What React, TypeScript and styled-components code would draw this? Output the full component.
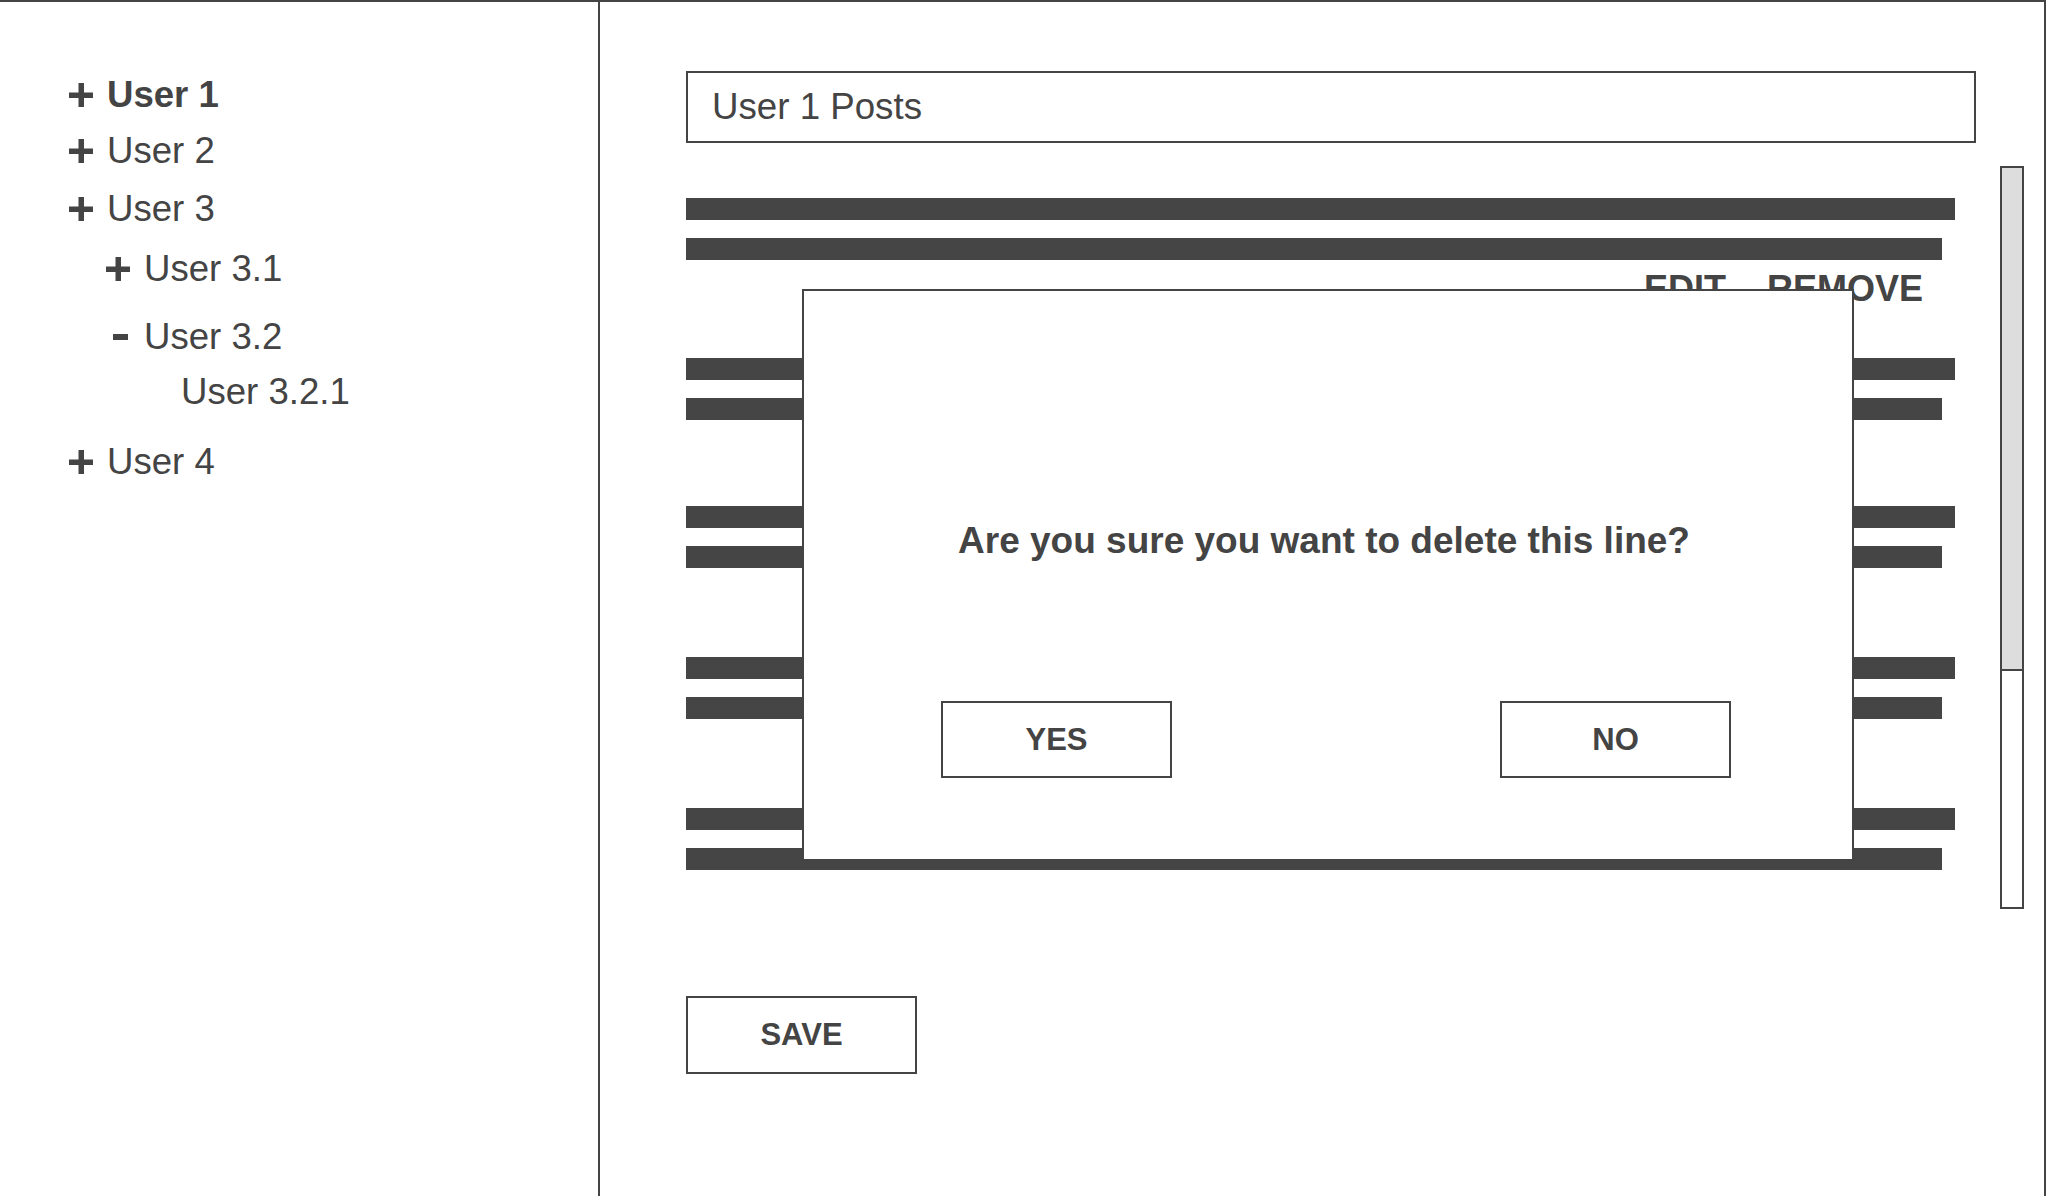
import styled, { createGlobalStyle } from 'styled-components';

const GlobalStyle = createGlobalStyle`
  html, body {
    margin: 0;
    padding: 0;
    background: #fff;
  }
  body {
    font-family: 'Liberation Sans', Arial, sans-serif;
    color: #444;
  }
  * {
    box-sizing: border-box;
  }
`;

type TreeItem = {
  label: string;
  level: number;
  marker: 'plus' | 'minus' | null;
  bold?: boolean;
  gap: number;
};

// ツリーの項目
const treeItems: Array<TreeItem> = [
  { label: 'User 1', level: 0, marker: 'plus', bold: true, gap: 0 },
  { label: 'User 2', level: 0, marker: 'plus', gap: 16 },
  { label: 'User 3', level: 0, marker: 'plus', gap: 18 },
  { label: 'User 3.1', level: 1, marker: 'plus', gap: 20 },
  { label: 'User 3.2', level: 1, marker: 'minus', gap: 28 },
  { label: 'User 3.2.1', level: 2, marker: null, gap: 15 },
  { label: 'User 4', level: 0, marker: 'plus', gap: 30 },
];

// 投稿 (各行の後の余白)
const posts = [
  { actions: true, after: 50 },
  { actions: false, after: 86 },
  { actions: false, after: 89 },
  { actions: false, after: 89 },
  { actions: false, after: 0 },
];

const Marker = ({ type }: { type: 'plus' | 'minus' | null }) => {
  if (type === 'plus') {
    return (
      <svg width="24" height="24" viewBox="0 0 24 24">
        <rect x="9.5" y="0" width="5.5" height="24" fill="#444" />
        <rect x="0" y="9.5" width="24" height="5.5" fill="#444" />
      </svg>
    );
  }
  if (type === 'minus') {
    return (
      <svg width="24" height="24" viewBox="0 0 24 24">
        <rect x="7" y="9" width="15" height="6" fill="#444" />
      </svg>
    );
  }
  return null;
};

export default function App() {
  return (
    <>
      <GlobalStyle />
      <SFrame>
        <SSidebar>
          {treeItems.map((item) => (
            <STreeRow key={item.label} $level={item.level} $gap={item.gap}>
              <SMarkerSlot>
                <Marker type={item.marker} />
              </SMarkerSlot>
              <STreeLabel $bold={item.bold}>{item.label}</STreeLabel>
            </STreeRow>
          ))}
        </SSidebar>

        <SMain>
          <STitleBox>User 1 Posts</STitleBox>

          <SListArea>
            <SPostList>
              {posts.map((post, i) => (
                <SPost key={i} $after={post.after}>
                  <SBar $width={1269} />
                  <SBar $width={1256} />
                  {post.actions && (
                    <SActions>
                      <span>EDIT</span>
                      <span>REMOVE</span>
                    </SActions>
                  )}
                </SPost>
              ))}
            </SPostList>
            <SScrollbar>
              <SThumb />
            </SScrollbar>
          </SListArea>

          <SFooter>
            <SButton $width={231} $height={78}>SAVE</SButton>
          </SFooter>

          <SModal>
            <SModalText>Are you sure you want to delete this line?</SModalText>
            <SModalButtons>
              <SButton $width={231} $height={77}>YES</SButton>
              <SButton $width={231} $height={77}>NO</SButton>
            </SModalButtons>
          </SModal>
        </SMain>
      </SFrame>
    </>
  );
}

const SFrame = styled.div`
  display: flex;
  width: 2046px;
  height: 100vh;
  border-top: 2px solid #444;
  border-right: 2px solid #444;
  overflow: hidden;
`;

const SSidebar = styled.aside`
  width: 600px;
  flex-shrink: 0;
  border-right: 2px solid #444;
  padding-top: 73px;
`;

const STreeRow = styled.div<{ $level: number; $gap: number }>`
  display: flex;
  align-items: center;
  height: 40px;
  margin-top: ${(p) => p.$gap}px;
  padding-left: ${(p) => 69 + p.$level * 37}px;
`;

const SMarkerSlot = styled.span`
  display: flex;
  width: 24px;
  height: 24px;
  margin-right: 14px;
  flex-shrink: 0;
`;

const STreeLabel = styled.span<{ $bold?: boolean }>`
  font-size: 36.6px;
  line-height: 40px;
  font-weight: ${(p) => (p.$bold ? 700 : 400)};
  white-space: nowrap;
`;

const SMain = styled.main`
  position: relative;
  flex: 1;
  padding: 69px 20px 0 86px;
`;

const STitleBox = styled.div`
  display: flex;
  align-items: center;
  width: 1290px;
  height: 72px;
  padding-left: 24px;
  border: 2px solid #444;
  font-size: 36.7px;
`;

const SListArea = styled.div`
  display: flex;
  align-items: flex-start;
  margin-top: 23px;
  height: 743px;
`;

const SPostList = styled.div`
  width: 1272px;
  padding-top: 32px;
  display: flex;
  flex-direction: column;
`;

const SPost = styled.div<{ $after: number }>`
  display: flex;
  flex-direction: column;
  gap: 18px;
  margin-bottom: ${(p) => p.$after}px;
`;

const SBar = styled.div<{ $width: number }>`
  width: ${(p) => p.$width}px;
  height: 22px;
  background: #454545;
`;

const SActions = styled.div`
  display: flex;
  justify-content: flex-end;
  gap: 41px;
  height: 40px;
  margin-top: -9px;
  margin-bottom: -1px;
  padding-right: 35px;
  font-size: 36px;
  line-height: 40px;
  font-weight: 700;
`;

const SScrollbar = styled.div`
  margin-left: auto;
  width: 24px;
  height: 743px;
  border: 2px solid #444;
  display: flex;
  flex-direction: column;
`;

const SThumb = styled.div`
  height: 503px;
  background: #ddd;
  border-bottom: 2px solid #444;
`;

const SFooter = styled.div`
  display: flex;
  margin-top: 87px;
`;

const SButton = styled.div<{ $width: number; $height: number }>`
  display: flex;
  align-items: center;
  justify-content: center;
  width: ${(p) => p.$width}px;
  height: ${(p) => p.$height}px;
  border: 2px solid #444;
  background: #fff;
  font-size: 31px;
  font-weight: 700;
`;

const SModal = styled.div`
  position: absolute;
  left: 202px;
  top: 287px;
  width: 1052px;
  height: 572px;
  border: 2px solid #444;
  background: #fff;
  display: flex;
  flex-direction: column;
  padding-top: 230px;
`;

const SModalText = styled.div`
  font-size: 37px;
  line-height: 40px;
  font-weight: 700;
  text-align: center;
  white-space: nowrap;
  padding-right: 8px;
`;

const SModalButtons = styled.div`
  display: flex;
  justify-content: space-between;
  margin-top: 140px;
  padding: 0 121px 0 137px;
`;
